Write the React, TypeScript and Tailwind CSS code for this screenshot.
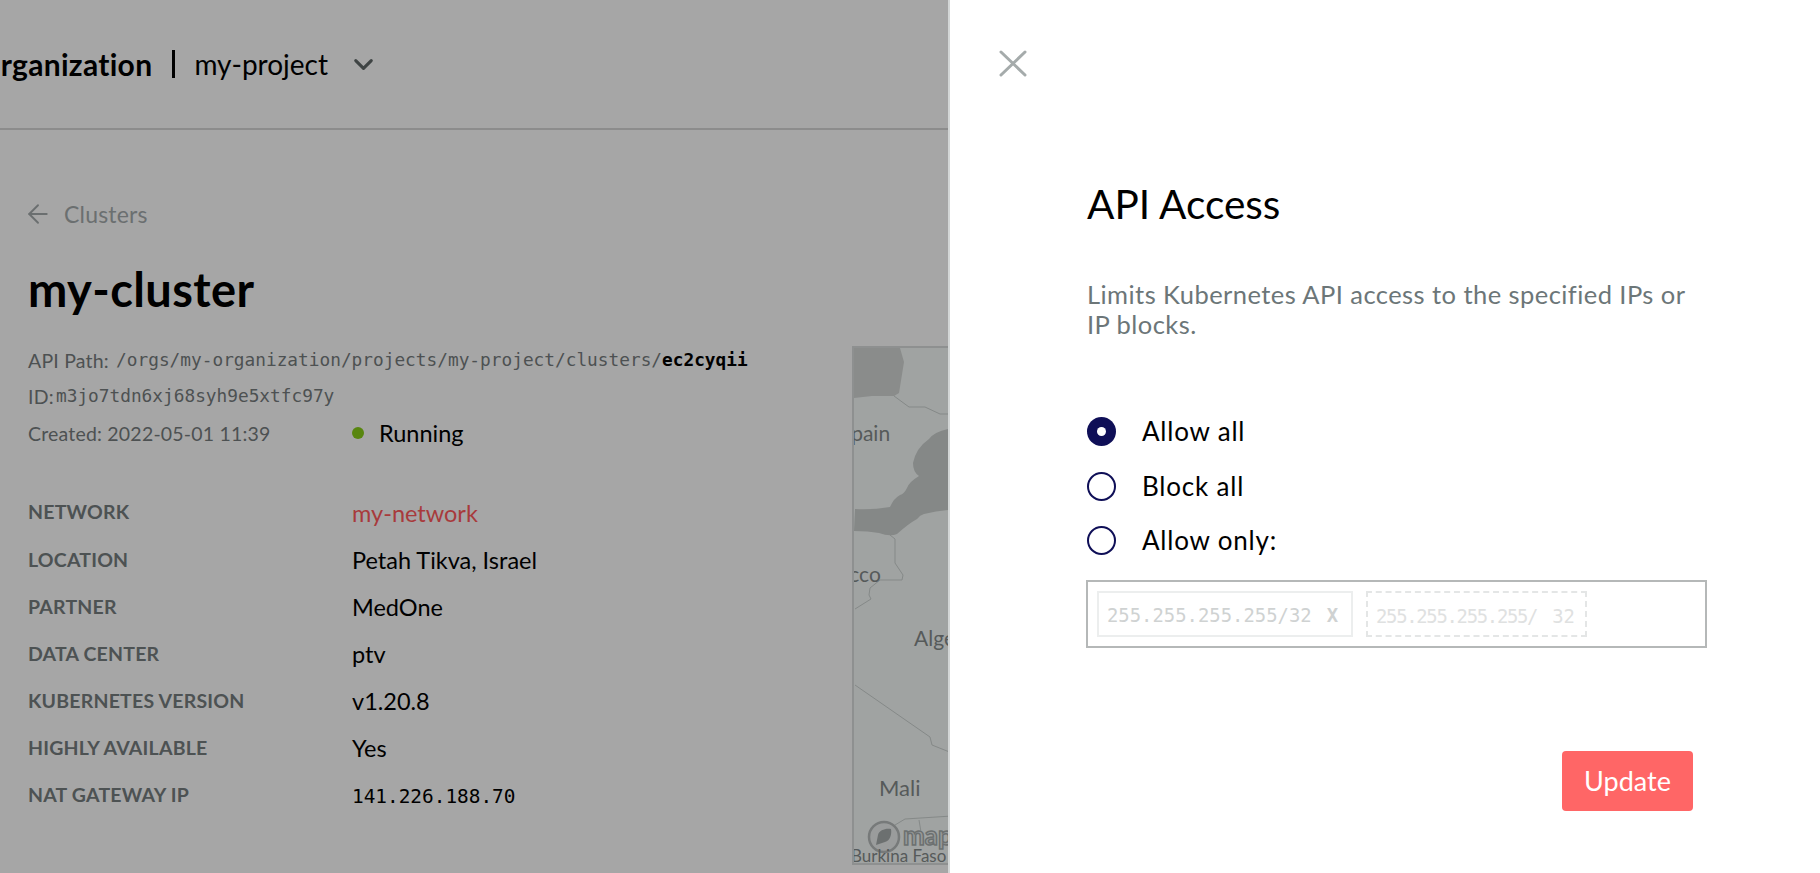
import React from 'react'
import { ChevronDown, ArrowLeft } from 'lucide-react'

const sans = 'font-["Lato","Noto_Sans",sans-serif]'
const mono = 'font-["DejaVu_Sans_Mono","Liberation_Mono",monospace]'

const rows = [
  { label: 'NETWORK', value: 'my-network', tone: 'text-[#a83a3c]' },
  { label: 'LOCATION', value: 'Petah Tikva, Israel' },
  { label: 'PARTNER', value: 'MedOne' },
  { label: 'DATA CENTER', value: 'ptv' },
  { label: 'KUBERNETES VERSION', value: 'v1.20.8' },
  { label: 'HIGHLY AVAILABLE', value: 'Yes' },
  { label: 'NAT GATEWAY IP', value: '141.226.188.70', isMono: true },
]

const MapPreview = () => (
  <div className="mt-[216px] h-[519px] w-[96px] shrink-0 overflow-hidden border-2 border-r-0 border-[#8e9090] bg-[#a0a3a2]">
    <svg width="94" height="517" viewBox="0 0 94 517" fontFamily="Lato, sans-serif" fill="#565a5a">
      <path d="M0 0H46L50 14L45 45L40 48L18 48L0 50Z" fill="#8a8c8b" />
      <path d="M94 81Q80 84 75 91Q62 100 59 115Q59 124 65 128Q55 134 53 140Q50 146 46 147Q40 150 36 159Q18 162 1 161L0 183Q14 183 25 185Q36 189 43 186Q54 176 63 171Q66 167 70 166Q82 163 94 162Z" fill="#858887" />
      <g fill="none" stroke="#858988" strokeWidth="1">
        <path d="M40 48L55 59L71 59L86 66L98 66" />
        <path d="M36 187L41 191L41 215L49 227L48 232L26 232L16 240L15 247L17 251L1 261" />
        <path d="M1 337L76 389L78 397L98 405" />
        <path d="M98 468L51 471L36 480M65 472L67 484" />
      </g>
      <text x="-14" y="93" fontSize="21">Spain</text>
      <text x="-55" y="234" fontSize="21">Morocco</text>
      <text x="60" y="298" fontSize="21">Algeria</text>
      <text x="25" y="448" fontSize="22">Mali</text>
      <circle cx="30" cy="489" r="15" fill="#9a9c9c" stroke="#777a7a" strokeWidth="2.5" />
      <path d="M22 497L24 487C25 482 32 480 37 481C38 486 36 493 31 494Z" fill="#6c7070" />
      <text x="49" y="497" fontSize="26" fontWeight="700" fill="#989b9b" stroke="#6c7070" strokeWidth="1.5">map</text>
      <text x="-3" y="514" fontSize="17">Burkina Faso</text>
    </svg>
  </div>
)

const Radio = ({ label, checked }: { label: string; checked?: boolean }) => (
  <label className="flex h-[29px] items-center gap-[26px] text-[26px] tracking-[0.8px] text-black">
    {checked ? (
      <span className="flex size-[29px] items-center justify-center rounded-full bg-[#0f0f57]">
        <span className="size-[9px] rounded-full bg-white" />
      </span>
    ) : (
      <span className="size-[29px] rounded-full border-2 border-[#0f0f57]" />
    )}
    {label}
  </label>
)

export default function App() {
  return (
    <div className={`flex h-[873px] w-[1820px] overflow-hidden bg-white ${sans}`}>
      {/* page behind the drawer */}
      <div className="h-full w-[948px] shrink-0 overflow-hidden bg-[#a6a6a6]">
        <header className="flex h-[130px] items-center justify-end border-b-2 border-[#8c8c8c] pr-[569px] text-black">
          <span className="whitespace-nowrap text-[30px] font-bold tracking-[0.3px]">organization</span>
          <span className="ml-[20px] h-[28px] w-[3px] shrink-0 bg-black" />
          <span className="ml-[19px] whitespace-nowrap text-[28px]">my-project</span>
          <ChevronDown className="ml-[20px] size-[31px] shrink-0 text-[#3f4444]" strokeWidth={2.4} />
        </header>
        <div className="flex">
          <div className="w-[852px] shrink-0 pl-7">
            <div className="mt-[70px] flex h-7 items-center gap-[11px] text-[23px] tracking-[0.2px] text-[#6b6f70]">
              <ArrowLeft className="-ml-[5px] size-[30px]" strokeWidth={1.5} />
              Clusters
            </div>
            <h1 className="mt-[31px] text-[47px] leading-[60px] font-bold tracking-[0.4px] text-black">my-cluster</h1>
            <div className="mt-[23px] flex h-[36.5px] items-center text-[19.5px] tracking-[0.2px] text-[#4d5152]">
              API Path:&nbsp;
              <span className={`${mono} ml-[2px] text-[17.8px] tracking-normal`}>
                /orgs/my-organization/projects/my-project/clusters/<b className="text-black">ec2cyqii</b>
              </span>
            </div>
            <div className="flex h-[36.5px] items-center text-[19.5px] tracking-[0.2px] text-[#4d5152]">
              ID:&nbsp;<span className={`${mono} -ml-[3px] text-[17.8px] tracking-normal`}>m3jo7tdn6xj68syh9e5xtfc97y</span>
            </div>
            <div className="flex h-[36.5px] items-center text-[19.5px] tracking-[0.2px] text-[#4d5152]">
              <span className="w-[324px]">Created: 2022-05-01 11:39</span>
              <span className="size-3 rounded-full bg-[#58860f]" />
              <span className="ml-[15px] text-[23.5px] tracking-normal text-black">Running</span>
            </div>
            <dl className="mt-[37px]">
              {rows.map((r) => (
                <div key={r.label} className="flex h-[47.1px] items-center">
                  <dt className="w-[324px] text-[19.5px] font-bold tracking-[0.2px] text-[#4d5253]">{r.label}</dt>
                  <dd className={`${r.isMono ? `${mono} text-[19.4px]` : 'text-[23.5px]'} ${r.tone ?? 'text-black'} mt-[3px]`}>{r.value}</dd>
                </div>
              ))}
            </dl>
          </div>
          <MapPreview />
        </div>
      </div>

      {/* drawer */}
      <aside className="relative flex-1 border-l-2 border-[#d3d6d6] bg-white">
        <button className="absolute top-[47px] left-[47px] text-[#a5abab]">
          <svg width="32" height="32" viewBox="0 0 32 32" fill="none" stroke="currentColor" strokeWidth="3" strokeLinecap="round">
            <path d="M4 5L28 28M28 5L4 28" />
          </svg>
        </button>
        <div className="ml-[136px] w-[621px] pt-[177px]">
          <h2 className="ml-[1px] text-[40.5px] leading-[54px] text-black">API Access</h2>
          <p className="mt-[48px] ml-[1px] text-[25.5px] leading-[30px] tracking-[0.44px] text-[#6c7678]">
            Limits Kubernetes API access to the specified IPs or
            <br />
            IP blocks.
          </p>
          <div className="mt-[78px] ml-[1px] flex flex-col gap-[25.5px]">
            <Radio label="Allow all" checked />
            <Radio label="Block all" />
            <Radio label="Allow only:" />
          </div>
          <div className={`mt-[25px] flex h-[68px] items-center gap-[13px] border-2 border-[#b5b8b8] px-[9px] ${mono} text-[18.9px]`}>
            <div className="flex h-[46px] w-[256px] items-center justify-between border-2 border-[#eceeee] pt-[3px] pr-[13px] pl-[8px] text-[#cfd2d2]">
              <span>255.255.255.255/32</span>
              <b>X</b>
            </div>
            <div className="flex h-[46px] w-[221px] items-center border-2 border-dashed border-[#e4e6e6] pt-[5px] pl-[8px] text-[#dfe1e1]">
              <span className="tracking-[-1.3px]">255.255.255.255/</span>
              <span className="ml-[15px]">32</span>
            </div>
          </div>
          <div className="mt-[103px] flex justify-end pr-[14px]">
            <button className="h-[60px] w-[131px] rounded-[4px] bg-[#ff6666] text-[27px] text-white">Update</button>
          </div>
        </div>
      </aside>
    </div>
  )
}
